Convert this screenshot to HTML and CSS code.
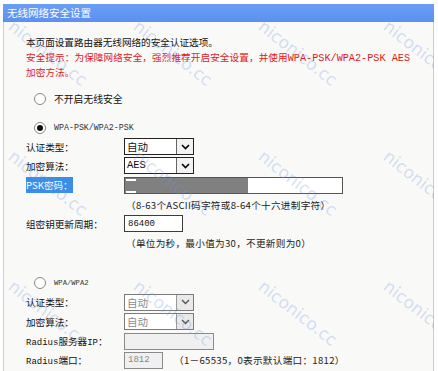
FILE: index.html
```html
<!DOCTYPE html>
<html lang="zh-CN">
<head>
    <meta charset="UTF-8">
    <title>无线网络安全设置</title>
    <link rel="stylesheet" href="styles.css">
</head>
<body>
<div class="panel">
    <div class="head">无线网络安全设置</div>
    <div class="body">
        <div class="intro">
            <p>本页面设置路由器无线网络的安全认证选项。</p>
            <p class="warn">安全提示：为保障网络安全，强烈推荐开启安全设置，并使用<span class="mono m-warn">WPA-PSK/WPA2-PSK AES</span></p>
            <p class="warn">加密方法。</p>
        </div>

        <div class="opt first">
            <span class="radio"></span>
            <span class="opt-text">不开启无线安全</span>
        </div>

        <div class="opt">
            <span class="radio on"></span>
            <span class="mono m-opt">WPA-PSK/WPA2-PSK</span>
        </div>
        <div class="row">
            <span class="label">认证类型：</span>
            <div class="sel"><span class="sel-val">自动</span><span class="arrow"><svg width="9" height="6" viewBox="0 0 9 6"><path d="M1 1l3.5 3.5L8 1" fill="none" stroke="#000" stroke-width="1.6"/></svg></span></div>
        </div>
        <div class="row">
            <span class="label">加密算法：</span>
            <div class="sel"><span class="sel-val mono m-sel">AES</span><span class="arrow"><svg width="9" height="6" viewBox="0 0 9 6"><path d="M1 1l3.5 3.5L8 1" fill="none" stroke="#000" stroke-width="1.6"/></svg></span></div>
        </div>
        <div class="row">
            <span class="label"><span class="picked">PSK密码：</span></span>
            <div class="input psk"><span class="mask"></span></div>
        </div>
        <div class="row">
            <span class="label"></span>
            <span class="hint">（8-63个ASCII码字符或8-64个十六进制字符）</span>
        </div>
        <div class="row">
            <span class="label">组密钥更新周期：</span>
            <div class="input period"><span class="mono m-val">86400</span></div>
        </div>
        <div class="row">
            <span class="label"></span>
            <span class="hint">（单位为秒，最小值为30，不更新则为0）</span>
        </div>

        <div class="opt last">
            <span class="radio"></span>
            <span class="mono m-opt2">WPA/WPA2</span>
        </div>
        <div class="row">
            <span class="label">认证类型：</span>
            <div class="sel off"><span class="sel-val">自动</span><span class="arrow"><svg width="9" height="6" viewBox="0 0 9 6"><path d="M1 1l3.5 3.5L8 1" fill="none" stroke="#555" stroke-width="1.4"/></svg></span></div>
        </div>
        <div class="row">
            <span class="label">加密算法：</span>
            <div class="sel off"><span class="sel-val">自动</span><span class="arrow"><svg width="9" height="6" viewBox="0 0 9 6"><path d="M1 1l3.5 3.5L8 1" fill="none" stroke="#555" stroke-width="1.4"/></svg></span></div>
        </div>
        <div class="row">
            <span class="label"><span class="mono m-lbl">Radius</span>服务器<span class="mono m-lbl">IP</span>：</span>
            <div class="input off radius-ip"></div>
        </div>
        <div class="row">
            <span class="label"><span class="mono m-lbl">Radius</span>端口：</span>
            <div class="input off port"><span class="mono m-val">1812</span></div>
            <span class="hint port-hint">（1－65535，0表示默认端口：1812）</span>
        </div>
    </div>

    <div class="wm">
        <span>niconico.cc</span><span>niconico.cc</span><span>niconico.cc</span><span>niconico.cc</span>
        <span>niconico.cc</span><span>niconico.cc</span><span>niconico.cc</span><span>niconico.cc</span>
        <span>niconico.cc</span><span>niconico.cc</span><span>niconico.cc</span><span>niconico.cc</span>
    </div>
</div>
</body>
</html>
```

FILE: styles.css
```css
* {
    margin: 0;
    padding: 0;
    box-sizing: border-box;
}

body {
    background: #fff;
    font-family: "Noto Sans CJK SC", "Noto Sans", sans-serif;
    font-size: 9.6px;
    color: #111;
}

.panel {
    width: 431px;
    height: 371px;
    margin: 4px 0 0 3px;
    position: relative;
    overflow: hidden;
}

.head {
    height: 18px;
    line-height: 18px;
    padding-left: 4px;
    background: linear-gradient(#6a9ef5, #5b90f2);
    color: #fff;
    font-size: 10.5px;
}

.body {
    height: 353px;
    padding: 13px 0 0 22px;
    background: #f9f9f8;
    border-left: 1px solid #f0c890;
    border-right: 1px solid #f0c890;
}

.intro p {
    height: 15px;
    line-height: 15px;
    white-space: nowrap;
}

.warn {
    color: #e01818;
    letter-spacing: 0.1px;
}

.mono {
    font-family: "Liberation Mono", monospace;
}

.m-warn {
    font-size: 10.2px;
    letter-spacing: 0;
}

.m-opt {
    font-size: 8.3px;
    color: #333;
}

.m-opt2 {
    font-size: 7.2px;
    color: #333;
}

.m-sel {
    font-size: 8.5px;
}

.m-val {
    font-size: 9px;
}

.m-lbl {
    font-size: 9px;
}

.opt {
    height: 19px;
    display: flex;
    align-items: center;
    padding-left: 8px;
}

.opt.first {
    margin-top: 9px;
    margin-bottom: 10px;
}

.opt.last {
    margin-top: 21px;
}

.radio {
    width: 12px;
    height: 12px;
    border: 1px solid #8a8a8a;
    border-radius: 50%;
    background: #fff;
    margin-right: 8px;
    display: flex;
    align-items: center;
    justify-content: center;
}

.radio.on::after {
    content: "";
    width: 6px;
    height: 6px;
    border-radius: 50%;
    background: #111;
}

.opt-text {
    font-size: 9.8px;
}

.row {
    height: 19.3px;
    display: flex;
    align-items: center;
}

.label {
    width: 98px;
    flex: none;
}

.picked {
    background: #3a8ee6;
    color: #fff;
    padding: 1px 0;
}

.sel {
    width: 70px;
    height: 17px;
    border: 1px solid #222;
    background: #fff;
    display: flex;
}

.sel-val {
    flex: 1;
    padding-left: 2px;
    line-height: 15px;
    font-size: 10.5px;
}

.arrow {
    width: 17px;
    border-left: 1px solid #666;
    background: #f2f2f2;
    display: flex;
    align-items: center;
    justify-content: center;
}

.sel.off {
    border-color: #7a7a7a;
}

.sel.off .sel-val {
    color: #8a8a8a;
}

.sel.off .arrow {
    background: #e9e9e9;
    border-left-color: #999;
}

.input {
    height: 17px;
    border: 1px solid #3c3c3c;
    background: #fff;
    padding-left: 3px;
    display: flex;
    align-items: center;
}

.input.psk {
    width: 219px;
    padding-left: 0;
    border-color: #555;
}

.mask {
    width: 123px;
    height: 15px;
    background: #808080;
    position: relative;
}

.mask::before,
.mask::after {
    content: "";
    position: absolute;
    left: 1px;
    width: 10px;
    height: 2px;
    background: #fff;
}

.mask::before {
    top: 1px;
}

.mask::after {
    bottom: 0;
}

.input.period {
    width: 59px;
}

.input.off {
    border-color: #8a8a8a;
    background: #f0f0f0;
}

.input.radius-ip {
    width: 90px;
}

.input.port {
    width: 39px;
    color: #8a8a8a;
}

.hint {
    padding-left: 2px;
    font-size: 9.6px;
    letter-spacing: 0.3px;
    color: #222;
}

.port-hint {
    padding-left: 11px;
}

.wm {
    position: absolute;
    top: 12px;
    left: 14px;
    display: grid;
    grid-template-columns: repeat(4, 125px);
    grid-auto-rows: 130px;
    pointer-events: none;
}

.wm span {
    display: block;
    width: 150px;
    font-family: "DejaVu Sans", sans-serif;
    font-size: 17px;
    color: rgba(110, 150, 225, 0.3);
    transform: rotate(38deg);
    transform-origin: 0 0;
    white-space: nowrap;
}
```
